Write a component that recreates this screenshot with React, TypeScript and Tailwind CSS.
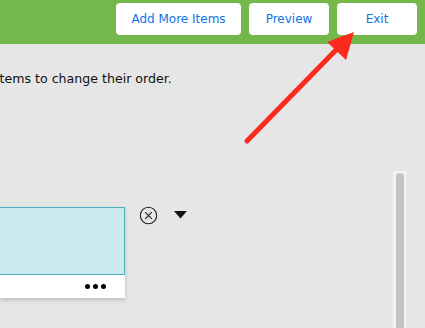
import { useState } from "react";

const FONT = { fontFamily: '"DejaVu Sans", Verdana, sans-serif' };

function HeaderButton({ label, width }: { label: string; width: string }) {
  return (
    <button
      className={`h-[32px] ${width} rounded-[4px] bg-white text-[12px] text-[#1273e6]`}
      style={FONT}
    >
      {label}
    </button>
  );
}

function RemoveIcon() {
  return (
    <svg width="19" height="19" viewBox="0 0 19 19" fill="none">
      <circle cx="9.5" cy="9.5" r="8.2" stroke="#222" strokeWidth="1.1" />
      <path d="M6.2 6.2 L12.8 12.8 M12.8 6.2 L6.2 12.8" stroke="#222" strokeWidth="1.1" />
    </svg>
  );
}

function CaretIcon() {
  return (
    <svg width="13" height="8" viewBox="0 0 13 8">
      <path d="M0 0 H13 L6.5 7.5 Z" fill="#111" />
    </svg>
  );
}

export default function App() {
  const [items] = useState(["Item 1"]);

  return (
    <div className="relative h-[328px] w-[425px] overflow-hidden bg-[#e6e6e6]" style={FONT}>
      <header className="flex h-[44px] items-start justify-end gap-[8px] bg-[#74b74b] pr-[8px] pt-[3px]">
        <HeaderButton label="Add More Items" width="w-[125px]" />
        <HeaderButton label="Preview" width="w-[80px]" />
        <HeaderButton label="Exit" width="w-[80px]" />
      </header>

      <div className="flex">
        <div className="flex-1">
          <p className="ml-[-4px] mt-[26px] whitespace-nowrap text-[12.6px] text-[#111]">
            items to change their order.
          </p>

          {items.map((it) => (
            <div key={it} className="mt-[118px] flex items-start">
              <div className="w-[125px] shadow-[0_2px_4px_rgba(0,0,0,0.18)]">
                <div className="h-[68px] border border-l-0 border-[#47b1c0] bg-[#c9e9ee]" />
                <div className="flex h-[23px] items-center justify-end bg-white pr-[19px]">
                  <span className="flex gap-[3px]">
                    <span className="h-[5px] w-[5px] rounded-full bg-black" />
                    <span className="h-[5px] w-[5px] rounded-full bg-black" />
                    <span className="h-[5px] w-[5px] rounded-full bg-black" />
                  </span>
                </div>
              </div>
              <div className="ml-[14px] mt-[-1px]">
                <RemoveIcon />
              </div>
              <div className="ml-[16px] mt-[4px]">
                <CaretIcon />
              </div>
            </div>
          ))}
        </div>

        <div className="mr-[19px] mt-[127px] flex h-[200px] w-[13px] justify-center bg-[#f2f2f2] pt-[2px]">
          <div className="h-full w-[8px] rounded-t-full bg-[#c3c3c3]" />
        </div>
      </div>

      <svg
        className="pointer-events-none absolute left-0 top-0"
        width="425"
        height="328"
        viewBox="0 0 425 328"
      >
        <line x1="247" y1="141" x2="336" y2="50" stroke="#fb2a1e" strokeWidth="5" strokeLinecap="round" />
        <path d="M354 32 L327 42 L346 60 Z" fill="#fb2a1e" />
      </svg>
    </div>
  );
}
